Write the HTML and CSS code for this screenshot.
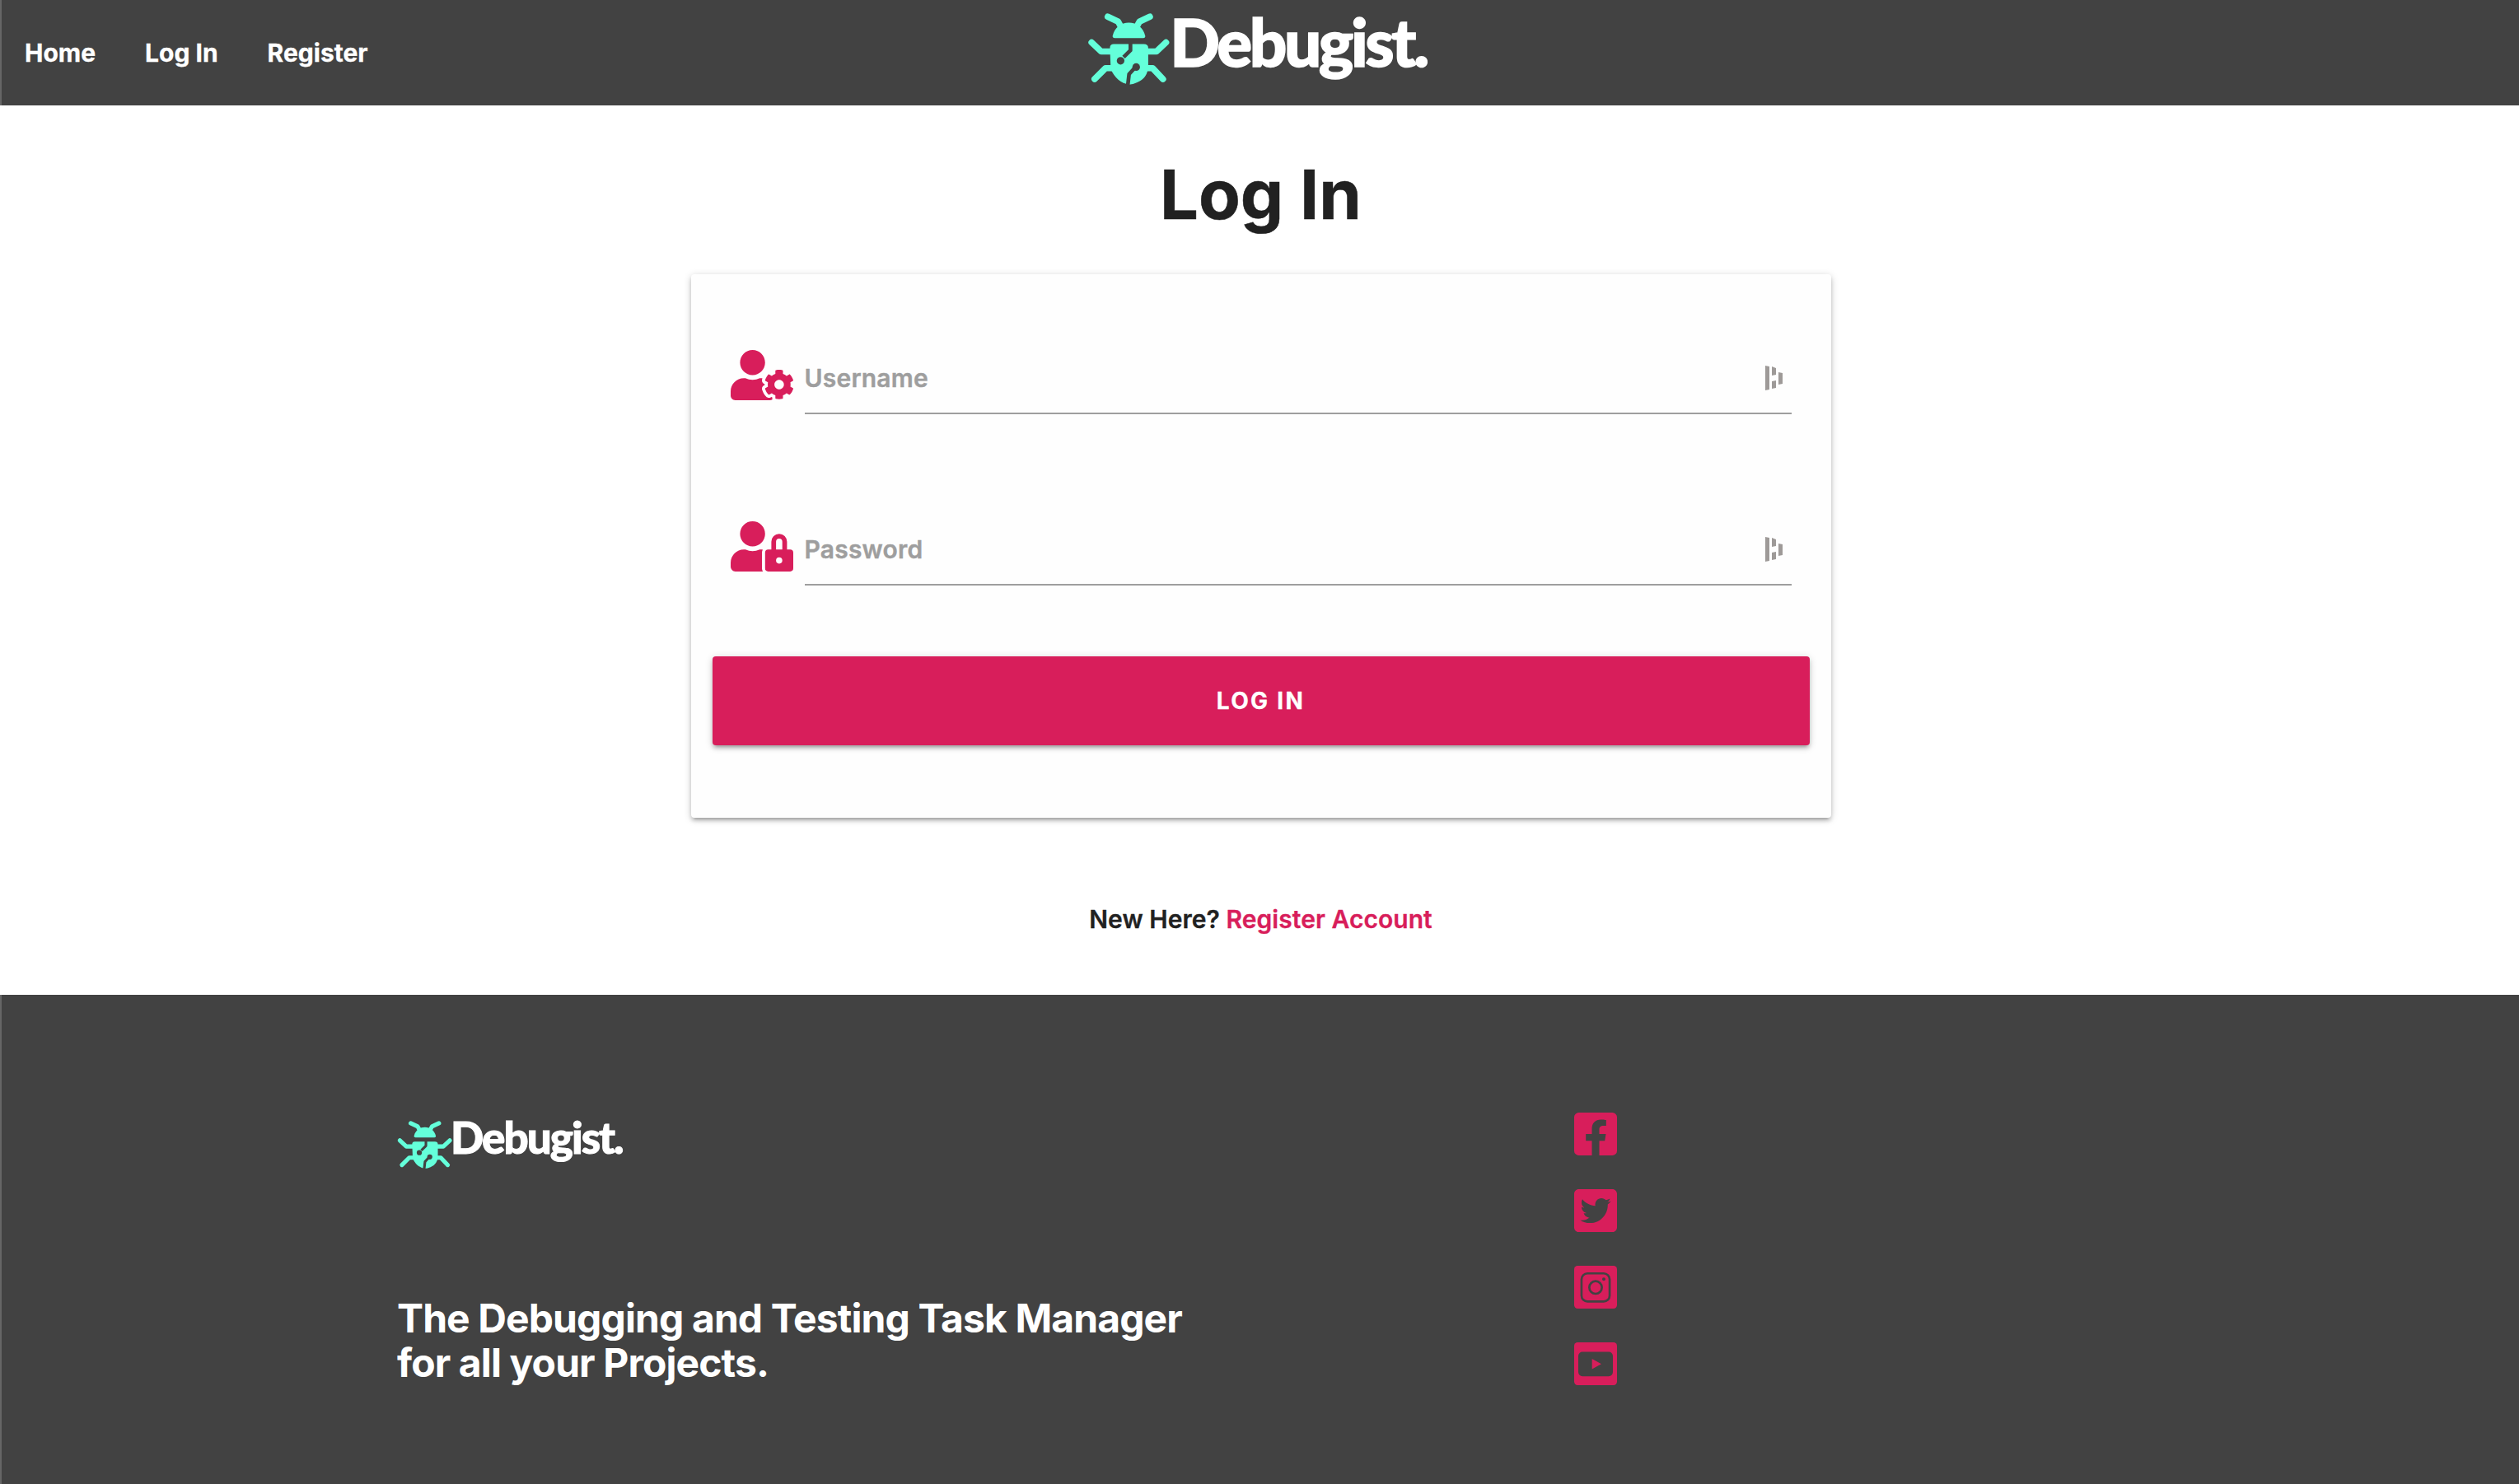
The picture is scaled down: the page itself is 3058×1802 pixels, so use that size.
FILE: index.html
```html
<!DOCTYPE html>
<html lang="en">
<head>
<meta charset="utf-8">
<title>Debugist - Log In</title>
<link rel="stylesheet" href="styles.css">
</head>
<body>
<svg class="defs" width="0" height="0" aria-hidden="true">
  <symbol id="bug" viewBox="60 45 300 265">
    <g fill="none" stroke="#64ffda" stroke-width="23" stroke-linecap="round" stroke-linejoin="round">
      <path d="M134 58 L172 76 L186 102"/>
      <path d="M288 58 L250 76 L236 102"/>
      <path d="M75 152 L110 185 L150 185"/>
      <path d="M347 152 L312 185 L272 185"/>
      <path d="M86 286 L126 246 L150 246"/>
      <path d="M336 286 L298 246 L272 246"/>
    </g>
    <path fill="#64ffda" d="M152 128 C158 98 184 80 211 80 C240 80 264 98 271 128 Q272 136 264 136 H160 Q151 136 152 128 Z"/>
    <path fill="#64ffda" d="M142 172 Q142 158 156 158 H266 Q282 158 282 172 V240 Q280 282 242 298 Q226 306 212 306 Q168 300 145 250 Z"/>
    <g fill="none" stroke="#424242" stroke-width="14" stroke-linecap="round" stroke-linejoin="round">
      <path stroke-linecap="butt" d="M217 154 V181 L192 206"/>
      <path stroke-linecap="butt" d="M232 246 L212 268 L207 312"/>
    </g>
    <circle cx="181" cy="219" r="14" fill="#424242"/>
    <circle cx="238" cy="242" r="14" fill="#424242"/>
  </symbol>
  <symbol id="user-cog" viewBox="0 0 640 512">
    <path d="M610.5 373.3c2.6-14.1 2.6-28.5 0-42.6l25.8-14.9c3-1.7 4.3-5.2 3.3-8.5-6.7-21.5-18.2-41-33.2-57.1-2.3-2.5-6-3.1-9-1.4l-25.8 14.9c-10.9-9.3-23.4-16.5-36.9-21.3v-29.8c0-3.4-2.4-6.4-5.7-7.1-22.3-5-45-4.8-66.2 0-3.3.7-5.7 3.7-5.7 7.1v29.8c-13.5 4.8-26 12-36.9 21.3l-25.8-14.9c-2.9-1.7-6.7-1.1-9 1.4-15 16.1-26.5 35.6-33.2 57.1-1 3.3.4 6.8 3.3 8.5l25.8 14.9c-2.6 14.1-2.6 28.5 0 42.6l-25.8 14.9c-3 1.7-4.3 5.2-3.3 8.5 6.7 21.5 18.2 41 33.2 57.1 2.3 2.5 6 3.1 9 1.4l25.8-14.9c10.9 9.3 23.4 16.5 36.9 21.3v29.8c0 3.4 2.4 6.4 5.7 7.1 22.3 5 45 4.8 66.2 0 3.3-.7 5.7-3.7 5.7-7.1v-29.8c13.5-4.8 26-12 36.9-21.3l25.8 14.9c2.9 1.7 6.7 1.1 9-1.4 15-16.1 26.5-35.6 33.2-57.1 1-3.3-.4-6.8-3.3-8.5l-25.8-14.9zM496 400.5c-26.8 0-48.5-21.8-48.5-48.5s21.8-48.5 48.5-48.5 48.5 21.8 48.5 48.5-21.7 48.5-48.5 48.5zM224 256c70.7 0 128-57.3 128-128S294.7 0 224 0 96 57.3 96 128s57.3 128 128 128zm201.2 226.5c-2.3-1.2-4.6-2.6-6.8-3.9l-7.9 4.6c-6 3.4-12.8 5.3-19.6 5.3-10.9 0-21.4-4.6-28.9-12.6-18.3-19.8-32.3-43.9-40.2-69.6-5.5-17.7 1.9-36.4 17.9-45.7l7.9-4.6c-.1-2.6-.1-5.2 0-7.8l-7.9-4.6c-16-9.2-23.4-28-17.9-45.7.9-2.9 2.2-5.8 3.2-8.7-3.8-.3-7.5-1.2-11.4-1.2h-16.7c-22.2 10.2-46.9 16-72.9 16s-50.6-5.8-72.9-16h-16.7C60.2 288 0 348.2 0 422.4V464c0 26.5 21.5 48 48 48h352c10.1 0 19.5-3.2 27.2-8.5-1.2-3.8-2-7.7-2-11.8v-9.2z"/>
  </symbol>
  <symbol id="user-lock" viewBox="0 0 640 512">
    <path d="M224 256A128 128 0 1 0 96 128a128 128 0 0 0 128 128zm96 64a63.08 63.08 0 0 1 8.1-30.5c-4.8-.5-9.5-1.5-14.5-1.5h-16.7a174.08 174.08 0 0 1-145.8 0h-16.7A134.43 134.43 0 0 0 0 422.4V464a48 48 0 0 0 48 48h280.9a63.54 63.54 0 0 1-8.9-32zm288-32h-32v-80a80 80 0 0 0-160 0v80h-32a32 32 0 0 0-32 32v160a32 32 0 0 0 32 32h224a32 32 0 0 0 32-32V320a32 32 0 0 0-32-32zM496 432a32 32 0 1 1 32-32 32 32 0 0 1-32 32zm32-144h-64v-80a32 32 0 0 1 64 0z"/>
  </symbol>
  <symbol id="dash" viewBox="0 0 21 30">
    <path d="M0 0 L5 1 V29 L0 30 Z M8 1 L13 3 V11 L8 12 Z M8 19 L13 18 V27 L8 28 Z M16 8 L21 9 V22 L16 23 Z"/>
  </symbol>
</svg>

<nav class="nav">
  <ul class="nav-links">
    <li><a href="#">Home</a></li>
    <li><a href="#">Log In</a></li>
    <li><a href="#">Register</a></li>
  </ul>
  <a href="#" class="logo">
    <svg class="logo-bug"><use href="#bug"/></svg>
    <span class="logo-word">Debugist.</span>
  </a>
</nav>

<main class="main">
  <h1 class="title">Log In</h1>
  <form class="card">
    <div class="field">
      <svg class="field-icon"><use href="#user-cog"/></svg>
      <div class="input-wrap">
        <span class="placeholder">Username</span>
        <svg class="dash"><use href="#dash"/></svg>
      </div>
    </div>
    <div class="field">
      <svg class="field-icon"><use href="#user-lock"/></svg>
      <div class="input-wrap">
        <span class="placeholder">Password</span>
        <svg class="dash"><use href="#dash"/></svg>
      </div>
    </div>
    <button class="btn" type="button">LOG IN</button>
  </form>
  <p class="signup">New Here? <a href="#">Register Account</a></p>
</main>

<footer class="footer">
  <div class="footer-left">
    <a href="#" class="logo logo-small">
      <svg class="logo-bug"><use href="#bug"/></svg>
      <span class="logo-word">Debugist.</span>
    </a>
    <p class="tagline">The Debugging and Testing Task Manager<br>for all your Projects.</p>
  </div>
  <div class="social">
    <svg class="social-icon" viewBox="0 32 448 448"><path d="M400 32H48A48 48 0 0 0 0 80v352a48 48 0 0 0 48 48h137.25V327.69h-63V256h63v-54.64c0-62.15 37-96.48 93.67-96.48 27.14 0 55.52 4.84 55.52 4.84v61h-31.27c-30.81 0-40.42 19.12-40.42 38.73V256h68.78l-11 71.69h-57.78V480H400a48 48 0 0 0 48-48V80a48 48 0 0 0-48-48z"/></svg>
    <svg class="social-icon" viewBox="0 32 448 448"><path d="M400 32H48C21.5 32 0 53.5 0 80v352c0 26.5 21.5 48 48 48h352c26.5 0 48-21.5 48-48V80c0-26.5-21.5-48-48-48zm-48.9 158.8c.2 2.8.2 5.7.2 8.5 0 86.7-66 186.6-186.6 186.6-37.2 0-71.7-10.8-100.7-29.4 5.3.6 10.4.8 15.8.8 30.7 0 58.9-10.4 81.4-28-28.8-.6-53-19.5-61.3-45.5 10.1 1.5 19.2 1.5 29.6-1.2-30-6.1-52.5-32.5-52.5-64.4v-.8c8.7 4.9 18.9 7.9 29.6 8.3a65.447 65.447 0 0 1-29.2-54.6c0-12.2 3.2-23.4 8.9-33.1 32.3 39.8 80.8 65.8 135.2 68.6-9.3-44.5 24-80.6 64-80.6 18.9 0 35.9 7.9 47.9 20.7 14.8-2.8 29-8.3 41.6-15.8-4.9 15.2-15.1 28-28.6 36.1 13.1-1.4 25.8-5 37.6-10.1-8.9 13.1-20.1 24.7-32.9 34z"/></svg>
    <svg class="social-icon" viewBox="0 0 448 448">
      <rect width="448" height="448" rx="36"/>
      <rect class="cut" x="77" y="80" width="294" height="294" rx="62"/>
      <circle class="cut" cx="224" cy="227" r="66"/>
      <circle class="dot" cx="310" cy="140" r="17"/>
    </svg>
    <svg class="social-icon" viewBox="0 0 448 448">
      <rect width="448" height="448" rx="36"/>
      <rect class="solid" x="43" y="100" width="362" height="255" rx="44"/>
      <path d="M187 172 L284 227 L187 281 Z"/>
    </svg>
  </div>
</footer>
</body>
</html>
```

FILE: styles.css
```css
* { box-sizing: border-box; }

html, body { margin: 0; padding: 0; }

body {
  font-family: Inter, "Liberation Sans", sans-serif;
  background: #fff;
  color: #212121;
  min-height: 1802px;
  display: flex;
  flex-direction: column;
}

a { text-decoration: none; color: inherit; }

.defs { display: block; }

.nav {
  height: 128px;
  background: #424242;
  border-left: 2px solid #666;
  display: grid;
  grid-template-columns: 1fr auto 1fr;
  align-items: center;
  padding-left: 28px;
  padding-right: 36px;
}

.nav-links {
  list-style: none;
  margin: 0;
  padding: 0;
  display: flex;
  gap: 60px;
  color: #fff;
  font-size: 30px;
  font-weight: 700;
  -webkit-text-stroke: .3px currentColor;
}

.logo {
  display: flex;
  align-items: flex-start;
  align-self: start;
  color: #fff;
}

.logo-bug {
  width: 100px;
  height: 88px;
  display: block;
  margin-top: 16px;
}

.logo-word {
  font-family: Lato, "Open Sans", sans-serif;
  font-weight: 900;
  font-size: 80px;
  line-height: 1;
  letter-spacing: -3.4px;
  margin-top: 10px;
  -webkit-text-stroke: 1.5px currentColor;
}

.main {
  flex: 1;
  display: flex;
  flex-direction: column;
  align-items: center;
  padding-left: 3px;
}

.title {
  margin: 52px 0 0;
  font-size: 83px;
  font-weight: 700;
  line-height: 112px;
  color: #212121;
  -webkit-text-stroke: .5px currentColor;
}

.card {
  margin-top: 41px;
  width: 1384px;
  height: 660px;
  background: #fefefe;
  border-radius: 4px;
  box-shadow: 0 4px 4px rgba(0,0,0,.14), 0 6px 2px -4px rgba(0,0,0,.12), 0 2px 10px rgba(0,0,0,.2);
  padding: 88px 26px 0;
  display: flex;
  flex-direction: column;
}

.field {
  display: flex;
  align-items: flex-start;
  padding-left: 22px;
  padding-right: 22px;
  height: 208px;
}

.field-icon {
  width: 76px;
  height: 61px;
  fill: #d81e5b;
  flex: none;
  margin-top: 4px;
  margin-right: 14px;
}

.input-wrap {
  flex: 1;
  height: 82px;
  border-bottom: 2px solid #9e9e9e;
  display: flex;
  align-items: center;
  justify-content: space-between;
  padding-right: 11px;
}

.placeholder {
  font-size: 30px;
  font-weight: 600;
  color: #9e9e9e;
  letter-spacing: .2px;
  margin-top: -5px;
  -webkit-text-stroke: .4px currentColor;
}

.dash {
  width: 21px;
  height: 30px;
  fill: #9e9a98;
  margin-top: -5px;
}

.btn {
  margin-top: -40px;
  height: 108px;
  border: 0;
  border-radius: 4px;
  background: #d81e5b;
  color: #fff;
  font-family: Inter, "Liberation Sans", sans-serif;
  font-size: 28px;
  font-weight: 700;
  letter-spacing: 2.3px;
  -webkit-text-stroke: .3px currentColor;
  box-shadow: 0 4px 4px rgba(0,0,0,.14), 0 6px 2px -4px rgba(0,0,0,.12), 0 2px 10px rgba(0,0,0,.2);
}

.signup {
  margin: 105px 0 0;
  font-size: 30px;
  font-weight: 600;
  line-height: 36px;
  letter-spacing: .05px;
  color: #212121;
  -webkit-text-stroke: .3px currentColor;
}

.signup a { color: #d81e5b; }

.footer {
  height: 594px;
  background: #424242;
  border-left: 2px solid #666;
  display: flex;
  align-items: flex-start;
  padding: 132px 0 0 480px;
  color: #fff;
}

.footer-left {
  width: 1429px;
  display: flex;
  flex-direction: column;
}

.logo-small .logo-bug {
  width: 67px;
  height: 59px;
  margin-top: 21px;
  margin-right: -2px;
}

.logo-small .logo-word {
  font-size: 53px;
  letter-spacing: -2px;
  margin-top: 14px;
  -webkit-text-stroke: 1px currentColor;
}

.tagline {
  margin: 154px 0 0;
  font-size: 48px;
  line-height: 54px;
  font-weight: 700;
  letter-spacing: -.9px;
}

.social {
  display: flex;
  flex-direction: column;
  gap: 41px;
  margin-top: 11px;
}

.social-icon {
  width: 52px;
  height: 52px;
  fill: #d81e5b;
  display: block;
}

.social-icon .cut {
  fill: none;
  stroke: #424242;
  stroke-width: 23;
}

.social-icon .dot,
.social-icon .solid { fill: #424242; }
```
